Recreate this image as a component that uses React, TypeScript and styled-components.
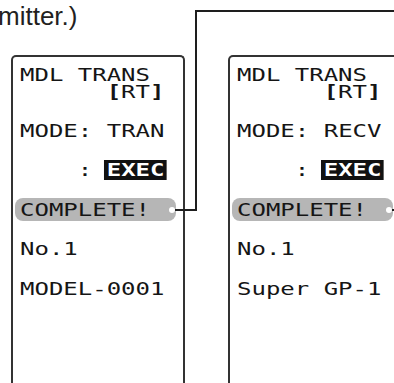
import styled, { createGlobalStyle } from "styled-components";

const GlobalStyle = createGlobalStyle`
  body {
    margin: 0;
    background: #fff;
  }
`;

const Page = styled.div`
  position: relative;
  width: 394px;
  height: 383px;
  overflow: hidden;
  background: #fff;
`;

const Caption = styled.div`
  height: 55px;
  box-sizing: border-box;
  padding-top: 1px;
  margin-left: -2px;
  font-family: "Liberation Sans", Arial, sans-serif;
  font-size: 26px;
  line-height: 30px;
  color: #231f20;
`;

const Screens = styled.div`
  display: flex;
  gap: 43px;
  padding-left: 11px;
`;

const Screen = styled.div`
  flex: 0 0 174px;
  height: 340px;
  box-sizing: border-box;
  border: 2px solid #333;
  border-bottom: none;
  border-radius: 5px 5px 0 0;
  padding: 9px 0 0 7px;
`;

const Title = styled.div`
  margin-bottom: 11px;
`;

const Row = styled.div`
  height: 39.5px;
  display: flex;
  align-items: center;
`;

// LCD text: a mono face stretched to the wide dot-matrix pitch
const Lcd = styled.div<{ $h?: number; $indent?: number }>`
  height: ${(p) => p.$h ?? 20}px;
  padding-left: ${(p) => p.$indent ?? 0}ch;
  display: flex;
  align-items: center;
  font-family: "DejaVu Sans Mono", monospace;
  font-size: 18px;
  line-height: ${(p) => p.$h ?? 20}px;
  white-space: pre;
  color: #151515;
  transform: scaleX(1.333);
  transform-origin: left center;
`;

const Bracket = styled.b`
  font-weight: 700;
`;

const Exec = styled.span`
  margin-left: -2px;
  padding: 0 2px;
  height: 20px;
  line-height: 20px;
  background: #111;
  color: #fff;
  font-weight: 700;
`;

const Pill = styled.div`
  width: 161px;
  height: 23px;
  margin-left: -5px;
  padding-left: 5px;
  box-sizing: border-box;
  display: flex;
  align-items: center;
  border-radius: 8px;
  background: #b6b6b6;
`;

const Leader = styled.svg`
  position: absolute;
  left: 0;
  top: 0;
  pointer-events: none;
`;

type Screen = { mode: string; name: string };

const screens: Screen[] = [
  { mode: "TRAN", name: "MODEL-0001" },
  { mode: "RECV", name: "Super GP-1" },
];

const App = () => {
  return (
    <Page>
      <GlobalStyle />
      <Caption>mitter.)</Caption>
      <Screens>
        {screens.map((s) => (
          <Screen key={s.mode}>
            <Title>
              <Lcd $h={17}>MDL TRANS</Lcd>
              <Lcd $h={17} $indent={6}>
                <Bracket>[</Bracket>RT<Bracket>]</Bracket>
              </Lcd>
            </Title>
            <Row>
              <Lcd>MODE: {s.mode}</Lcd>
            </Row>
            <Row>
              <Lcd>
                {"    : "}
                <Exec>EXEC</Exec>
              </Lcd>
            </Row>
            <Row>
              <Pill>
                <Lcd>COMPLETE!</Lcd>
              </Pill>
            </Row>
            <Row>
              <Lcd>No.1</Lcd>
            </Row>
            <Row>
              <Lcd>{s.name}</Lcd>
            </Row>
          </Screen>
        ))}
      </Screens>
      <Leader width="394" height="383" viewBox="0 0 394 383">
        <polyline
          points="394,11 196,11 196,210 175,210"
          fill="none"
          stroke="#1e1e1e"
          strokeWidth="2"
        />
        <circle cx="172" cy="210" r="3" fill="#fff" />
        <line x1="391" y1="210" x2="394" y2="210" stroke="#1e1e1e" strokeWidth="2" />
        <circle cx="389" cy="210" r="3" fill="#fff" />
      </Leader>
    </Page>
  );
};

export default App;
